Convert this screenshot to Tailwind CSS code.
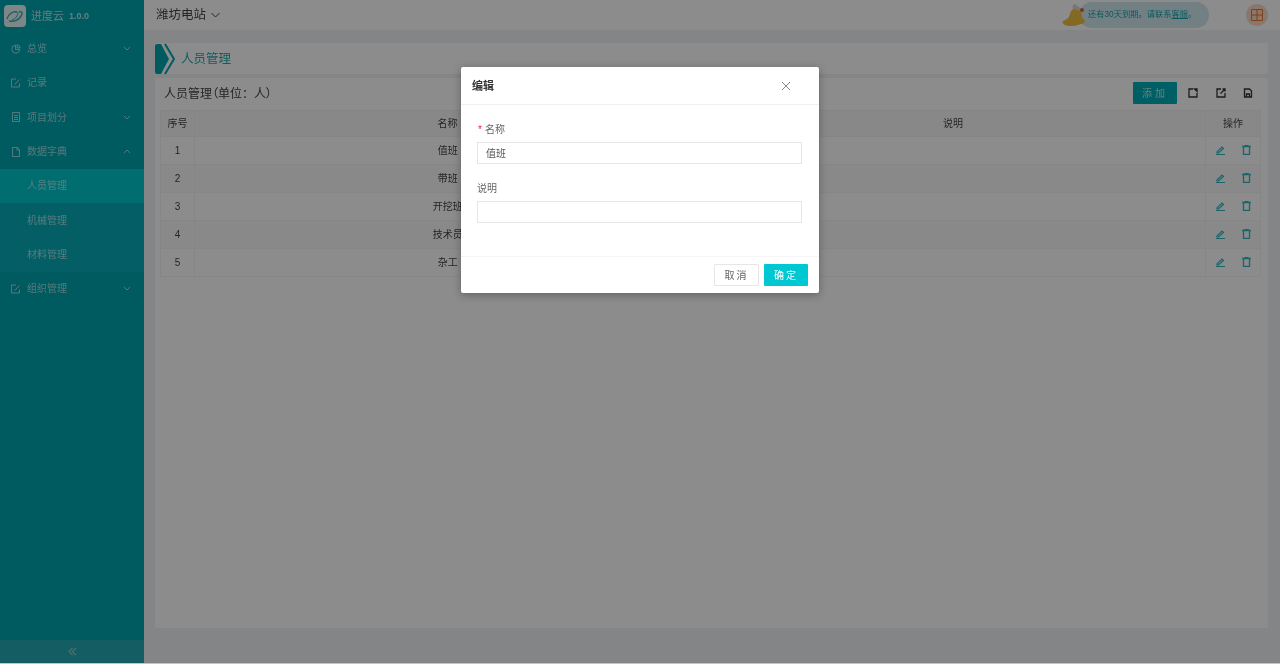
<!DOCTYPE html>
<html lang="zh-CN">
<head>
    <meta charset="UTF-8">
    <title>人员管理</title>
    <script src="https://cdn.jsdelivr.net/npm/@tailwindcss/browser@4"></script>
</head>
<body class="h-[664px] w-[1280px] overflow-hidden bg-[#c4c4c4] font-['Liberation_Sans','Noto_Sans_CJK_SC',sans-serif]">
<div class="relative flex h-[663px] w-[1280px] bg-[#f0f2f5] blur-[0.55px]">
    <!-- sidebar -->
    <aside class="flex h-full w-[144px] shrink-0 flex-col bg-[#00a6b1] text-[10px] text-white/60">
        <div class="flex h-[31.5px] items-center gap-[5px] pl-[4px]">
            <div class="flex h-[22px] w-[22px] items-center justify-center rounded-[4px] bg-white/90">
                <svg width="18" height="14" viewBox="0 0 18 14" fill="none" stroke="#39a9b0" stroke-width="1.4"><path d="M1 10c1-5 6-8 10-7M3 12c5 1 11-1 13-7 .6-2-1-3-3-2"/><path d="M6 11c3-1 6-4 6-8" stroke-width="1"/></svg>
            </div>
            <span class="text-[11px] text-white/70">进度云</span>
            <span class="pt-[2px] text-[9px] font-bold text-white/70">1.0.0</span>
        </div>
        <nav class="flex-1">
            <div class="flex h-[34.3px] items-center pl-[11px] pr-[13px]">
                <svg class="mr-[6px]" width="10" height="10" viewBox="0 0 10 10" fill="none" stroke="currentColor"><path d="M4.500 1.200a4 4 0 1 0 4.300 4.300H4.500z"/><path d="M6 .7a3.600 3.600 0 0 1 3.200 3.200H6z"/></svg>
                <span class="flex-1">总览</span>
                <svg width="8" height="5" viewBox="0 0 8 5" fill="none" stroke="currentColor"><path d="M1 1l3 3 3-3"/></svg>
            </div>
            <div class="flex h-[34.3px] items-center pl-[11px] pr-[13px]">
                <svg class="mr-[6px]" width="10" height="10" viewBox="0 0 10 10" fill="none" stroke="currentColor"><path d="M8.500 5.500v3.500h-8v-8H5"/><path d="M3.500 6.500l5-5"/></svg>
                <span class="flex-1">记录</span>
            </div>
            <div class="flex h-[34.3px] items-center pl-[11px] pr-[13px]">
                <svg class="mr-[6px]" width="10" height="10" viewBox="0 0 10 10" fill="none" stroke="currentColor"><path d="M1.500.5h7v9h-7zM3 3.500h4M3 5.500h4M3 7.500h4"/></svg>
                <span class="flex-1">项目划分</span>
                <svg width="8" height="5" viewBox="0 0 8 5" fill="none" stroke="currentColor"><path d="M1 1l3 3 3-3"/></svg>
            </div>
            <div class="flex h-[34.3px] items-center pl-[11px] pr-[13px]">
                <svg class="mr-[6px]" width="10" height="10" viewBox="0 0 10 10" fill="none" stroke="currentColor"><path d="M1.500.5h5l2 2v7h-7zM6 .5v2.500h2.500"/></svg>
                <span class="flex-1">数据字典</span>
                <svg width="8" height="5" viewBox="0 0 8 5" fill="none" stroke="currentColor"><path d="M1 4l3-3 3 3"/></svg>
            </div>
            <div class="bg-[#07aeb8]">
                <div class="flex h-[34.3px] items-center bg-[#00c6cc] pl-[27px]">人员管理</div>
                <div class="flex h-[34.3px] items-center pl-[27px]">机械管理</div>
                <div class="flex h-[34.3px] items-center pl-[27px]">材料管理</div>
            </div>
            <div class="flex h-[34.3px] items-center pl-[11px] pr-[13px]">
                <svg class="mr-[6px]" width="10" height="10" viewBox="0 0 10 10" fill="none" stroke="currentColor"><path d="M8.500 5.500v3.500h-8v-8H5"/><path d="M3.500 6.500l5-5"/></svg>
                <span class="flex-1">组织管理</span>
                <svg width="8" height="5" viewBox="0 0 8 5" fill="none" stroke="currentColor"><path d="M1 1l3 3 3-3"/></svg>
            </div>
        </nav>
        <div class="flex h-[23px] items-center justify-center bg-[#26a9b3] text-[#90c8cc]">
            <svg width="9" height="9" viewBox="0 0 9 9" fill="none" stroke="currentColor" stroke-width="1.200"><path d="M4.500 1L1 4.500 4.500 8M8 1L4.500 4.500 8 8"/></svg>
        </div>
    </aside>

    <div class="flex min-w-0 flex-1 flex-col">
        <!-- top bar -->
        <header class="flex h-[30px] shrink-0 items-center bg-white pl-[12px] pr-[12px]">
            <span class="text-[12.5px] text-[#444]">潍坊电站</span>
            <svg class="ml-[5px]" width="9" height="6" viewBox="0 0 9 6" fill="none" stroke="#444"><path d="M.5 1l4 4 4-4"/></svg>
            <div class="relative ml-auto mr-[37px] flex h-[26px] w-[130px] items-center rounded-full bg-[#cfe9ef] pl-[9px] text-[8.25px] text-[#16a6b0]">
                <span>还有30天到期。请联系<span class="underline">客服</span>。</span>
                <svg class="absolute -left-[18px] top-0" width="27" height="27" viewBox="0 0 27 27">
                    <path d="M12 7c3-2 7-1 8 3l1 5 3 4c0 2-2 3-4 3-5 2-12 3-16 1-2-1-3-2-2-4l4-2c2-1 2-3 3-5 0-2 2-4 3-5z" fill="#efbf3c"/>
                    <path d="M12 7c-1-3 0-5 2-5l4 3c1 1 2 2 2 4" fill="#d5d9dc"/>
                    <circle cx="21" cy="8" r="2" fill="#e2622d"/>
                </svg>
            </div>
            <div class="flex h-[22px] w-[22px] items-center justify-center rounded-full bg-[#fbd9c4]">
                <svg width="12" height="12" viewBox="0 0 12 12" fill="none" stroke="#e8772e"><path d="M.5.500h11v11H.5zM6 .5v11M.5 6h11"/></svg>
            </div>
        </header>

        <main class="flex min-h-0 flex-1 flex-col pb-[35px] pl-[11px] pr-[12px] pt-[13px]">
            <!-- page title -->
            <div class="flex h-[31px] shrink-0 items-center rounded-[2px] bg-white">
                <svg width="20" height="32" viewBox="0 0 20 32"><path d="M0 3q0-2 2-2h4l8 15-8 15H2q-2 0-2-2z" fill="#00a6b1"/><path d="M10 1l9 15-9 15" fill="none" stroke="#00a6b1" stroke-width="2"/></svg>
                <span class="ml-[6px] pt-[2px] text-[12.5px] text-[#22aab3]">人员管理</span>
            </div>
            <!-- card -->
            <section class="mt-[4px] flex min-h-0 flex-1 flex-col rounded-[2px] bg-white pl-[5px] pr-[4px]">
                <div class="flex h-[32px] shrink-0 items-center pl-[4px] pr-[11px]">
                    <span class="text-[12px] text-[#444]">人员管理<span class="[font-feature-settings:'palt']">（</span>单位：人<span class="[font-feature-settings:'palt']">）</span></span>
                    <button class="-mt-[2px] ml-auto h-[22px] w-[44px] rounded-[1px] bg-[#00aeb8] text-[10px] tracking-[3px] text-white/70">添加</button>
                    <svg class="-mt-[3px] ml-[11px]" width="10" height="10" viewBox="0 0 10 10" fill="none" stroke="#333" stroke-width="1.300"><path d="M5 1H1v8h8V5"/><path d="M6.500 1H9v2.500z" fill="#333"/></svg>
                    <svg class="-mt-[3px] ml-[18px]" width="10" height="10" viewBox="0 0 10 10" fill="none" stroke="#333" stroke-width="1.300"><path d="M5 1H1v8h8V5M4.500 5.500L9 1M6.500 1H9v2.500"/></svg>
                    <svg class="-mt-[3px] ml-[17px]" width="10" height="10" viewBox="0 0 10 10" fill="none" stroke="#333" stroke-width="1.300"><path d="M1.500 1h5l2 2v6h-7zM3.500 9V6h3v3"/></svg>
                </div>
                <table class="w-[1100px] table-fixed border-collapse text-center text-[10px] text-[#444]">
                    <colgroup>
                        <col class="w-[34px]">
                        <col class="w-[506px]">
                        <col class="w-[505px]">
                        <col class="w-[55px]">
                    </colgroup>
                    <thead>
                        <tr class="h-[26px] bg-[#f7f8fa]">
                            <th class="border border-[#f3f3f3] font-normal">序号</th>
                            <th class="border border-[#f3f3f3] font-normal">名称</th>
                            <th class="border border-[#f3f3f3] font-normal">说明</th>
                            <th class="border border-[#f3f3f3] font-normal">操作</th>
                        </tr>
                    </thead>
                    <tbody>
                        <tr class="h-[28px]">
                            <td class="border border-[#f5f5f5]">1</td><td class="border-b border-[#f5f5f5]">值班</td><td class="border-b border-[#f5f5f5]"></td>
                            <td class="border border-[#f5f5f5]"><div class="-mt-[2px] flex items-center justify-center gap-[16px]">
                                <svg width="11" height="10" viewBox="0 0 11 10" fill="none" stroke="#35b6be" stroke-width="1.200"><path d="M1 9.500h9M2 7l5-5 1.500 1.500-5 4.500H2z"/></svg>
                                <svg width="9" height="10" viewBox="0 0 9 10" fill="none" stroke="#35b6be" stroke-width="1.300"><path d="M0 1.500h9M3 1.500V.5h3v1M1.500 2v7.500h6V2"/></svg>
                            </div></td>
                        </tr>
                        <tr class="h-[28px] bg-[#fafafa]">
                            <td class="border border-[#f5f5f5]">2</td><td class="border-b border-[#f5f5f5]">带班</td><td class="border-b border-[#f5f5f5]"></td>
                            <td class="border border-[#f5f5f5]"><div class="-mt-[2px] flex items-center justify-center gap-[16px]">
                                <svg width="11" height="10" viewBox="0 0 11 10" fill="none" stroke="#35b6be" stroke-width="1.200"><path d="M1 9.500h9M2 7l5-5 1.500 1.500-5 4.500H2z"/></svg>
                                <svg width="9" height="10" viewBox="0 0 9 10" fill="none" stroke="#35b6be" stroke-width="1.300"><path d="M0 1.500h9M3 1.500V.5h3v1M1.500 2v7.500h6V2"/></svg>
                            </div></td>
                        </tr>
                        <tr class="h-[28px]">
                            <td class="border border-[#f5f5f5]">3</td><td class="border-b border-[#f5f5f5]">开挖班</td><td class="border-b border-[#f5f5f5]"></td>
                            <td class="border border-[#f5f5f5]"><div class="-mt-[2px] flex items-center justify-center gap-[16px]">
                                <svg width="11" height="10" viewBox="0 0 11 10" fill="none" stroke="#35b6be" stroke-width="1.200"><path d="M1 9.500h9M2 7l5-5 1.500 1.500-5 4.500H2z"/></svg>
                                <svg width="9" height="10" viewBox="0 0 9 10" fill="none" stroke="#35b6be" stroke-width="1.300"><path d="M0 1.500h9M3 1.500V.5h3v1M1.500 2v7.500h6V2"/></svg>
                            </div></td>
                        </tr>
                        <tr class="h-[28px] bg-[#fafafa]">
                            <td class="border border-[#f5f5f5]">4</td><td class="border-b border-[#f5f5f5]">技术员</td><td class="border-b border-[#f5f5f5]"></td>
                            <td class="border border-[#f5f5f5]"><div class="-mt-[2px] flex items-center justify-center gap-[16px]">
                                <svg width="11" height="10" viewBox="0 0 11 10" fill="none" stroke="#35b6be" stroke-width="1.200"><path d="M1 9.500h9M2 7l5-5 1.500 1.500-5 4.500H2z"/></svg>
                                <svg width="9" height="10" viewBox="0 0 9 10" fill="none" stroke="#35b6be" stroke-width="1.300"><path d="M0 1.500h9M3 1.500V.5h3v1M1.500 2v7.500h6V2"/></svg>
                            </div></td>
                        </tr>
                        <tr class="h-[28px]">
                            <td class="border border-[#f5f5f5]">5</td><td class="border-b border-[#f5f5f5]">杂工</td><td class="border-b border-[#f5f5f5]"></td>
                            <td class="border border-[#f5f5f5]"><div class="-mt-[2px] flex items-center justify-center gap-[16px]">
                                <svg width="11" height="10" viewBox="0 0 11 10" fill="none" stroke="#35b6be" stroke-width="1.200"><path d="M1 9.500h9M2 7l5-5 1.500 1.500-5 4.500H2z"/></svg>
                                <svg width="9" height="10" viewBox="0 0 9 10" fill="none" stroke="#35b6be" stroke-width="1.300"><path d="M0 1.500h9M3 1.500V.5h3v1M1.500 2v7.500h6V2"/></svg>
                            </div></td>
                        </tr>
                    </tbody>
                </table>
            </section>
        </main>
    </div>

    <!-- modal -->
    <div class="absolute inset-0 z-10 flex justify-center bg-black/45 pt-[67px]">
        <div class="flex h-[226px] w-[358px] flex-col rounded-[2px] bg-white shadow-[0_2px_8px_rgba(0,0,0,0.3)]">
            <div class="flex h-[38px] shrink-0 items-center border-b border-[#f0f0f0] pl-[11px] pr-[28px] pt-[1px]">
                <span class="text-[11px] font-bold text-[#333]">编辑</span>
                <svg class="ml-auto" width="10" height="10" viewBox="0 0 10 10" fill="none" stroke="#888"><path d="M1 1l8 8M9 1L1 9"/></svg>
            </div>
            <form class="flex-1 pl-[16px] pr-[16px] pt-[17px] text-[10px] text-[#666]">
                <label class="block h-[20px] pl-[1px]"><span class="mr-[3px] text-[#f5222d]">*</span>名称</label>
                <input type="text" value="值班" class="block h-[22px] w-[325px] border border-[#e6e6e6] px-[8px] pb-[2px] text-[10px] text-[#555]">
                <label class="mt-[17px] block h-[20px]">说明</label>
                <input type="text" class="block h-[22px] w-[325px] border border-[#e6e6e6] px-[8px] text-[10px]">
            </form>
            <div class="flex h-[37px] shrink-0 items-center justify-end gap-[5px] border-t border-[#f5f5f5] pr-[11px]">
                <button class="h-[22px] w-[45px] rounded-[1px] border border-[#e6e6e6] text-[10px] tracking-[2px] text-[#666]">取消</button>
                <button class="h-[22px] w-[44px] rounded-[1px] bg-[#00c8d2] text-[10px] tracking-[2px] text-white">确定</button>
            </div>
        </div>
    </div>
</div>
</body>
</html>
